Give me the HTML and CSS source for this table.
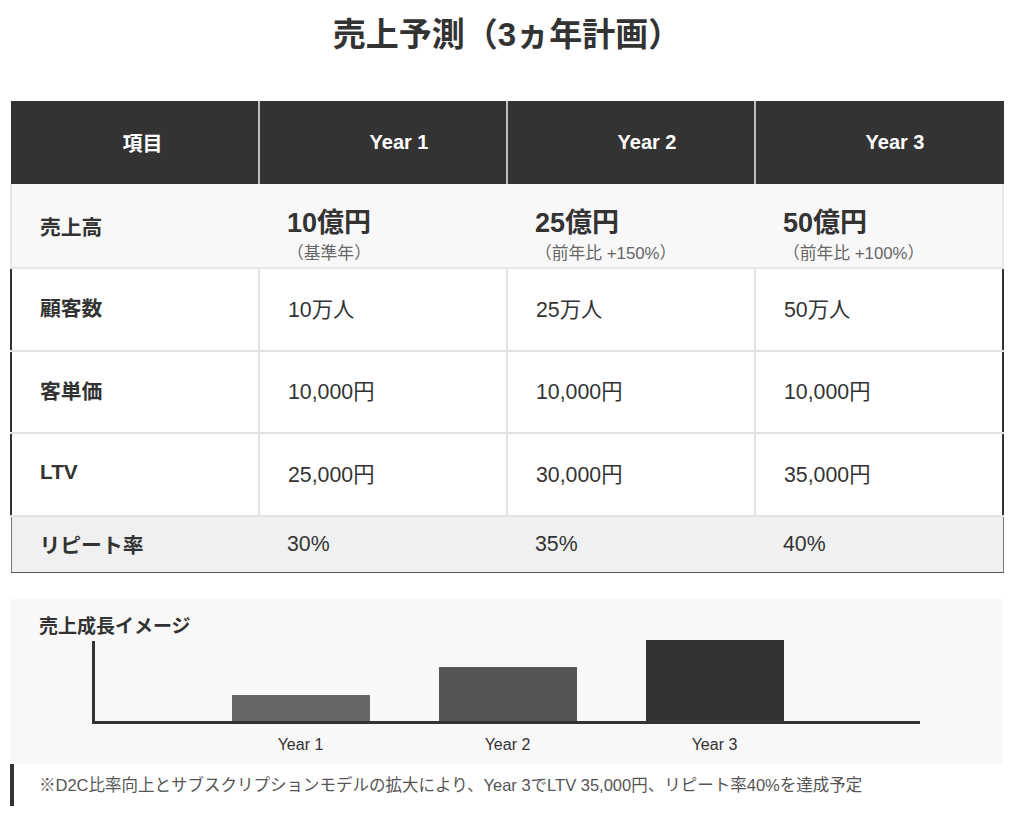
FILE: index.html
```html
<!DOCTYPE html>
<html lang="ja">
<head>
<meta charset="utf-8">
<title>売上予測（3ヵ年計画）</title>
<link rel="stylesheet" href="styles.css">
</head>
<body>
<div class="page">
  <h1 class="title">売上予測（3ヵ年計画）</h1>

  <table class="forecast">
    <thead>
      <tr class="head-row">
        <th class="th-item">項目</th>
        <th class="th-year">Year 1</th>
        <th class="th-year">Year 2</th>
        <th class="th-year th-last">Year 3</th>
      </tr>
    </thead>
    <tbody>
      <tr class="row-sales">
        <td class="label">売上高</td>
        <td class="val"><div class="big">10億円</div><div class="sub">（基準年）</div></td>
        <td class="val"><div class="big">25億円</div><div class="sub">（前年比 +150%）</div></td>
        <td class="val"><div class="big">50億円</div><div class="sub">（前年比 +100%）</div></td>
      </tr>
      <tr class="row">
        <td class="label">顧客数</td>
        <td class="val">10万人</td>
        <td class="val">25万人</td>
        <td class="val">50万人</td>
      </tr>
      <tr class="row">
        <td class="label">客単価</td>
        <td class="val">10,000円</td>
        <td class="val">10,000円</td>
        <td class="val">10,000円</td>
      </tr>
      <tr class="row">
        <td class="label">LTV</td>
        <td class="val">25,000円</td>
        <td class="val">30,000円</td>
        <td class="val">35,000円</td>
      </tr>
      <tr class="row-repeat">
        <td class="label">リピート率</td>
        <td class="val">30%</td>
        <td class="val">35%</td>
        <td class="val">40%</td>
      </tr>
    </tbody>
  </table>

  <section class="chart">
    <h2 class="chart-title">売上成長イメージ</h2>
    <div class="plot">
      <div class="bar bar1" style="height:33%"></div>
      <div class="bar bar2" style="height:67%"></div>
      <div class="bar bar3" style="height:101%"></div>
    </div>
    <div class="labels">
      <span class="xlabel">Year 1</span>
      <span class="xlabel">Year 2</span>
      <span class="xlabel">Year 3</span>
    </div>
  </section>

  <p class="note">※D2C比率向上とサブスクリプションモデルの拡大により、Year 3でLTV 35,000円、リピート率40%を達成予定</p>
</div>
</body>
</html>
```

FILE: styles.css
```css
* { box-sizing: border-box; }

body {
  margin: 0;
  background: #fff;
  color: #333;
  font-family: "Liberation Sans", "Noto Sans CJK JP", sans-serif;
}

.page {
  width: 994px;
  margin-left: 10px;
}

.title {
  margin: 0 0 48px;
  padding-top: 17px;
  font-size: 33px;
  line-height: 36px;
  font-weight: 700;
  text-align: center;
  color: #333;
}

.forecast {
  width: 994px;
  border-collapse: collapse;
  table-layout: fixed;
}

.head-row { height: 83px; }

.forecast th {
  background: #333;
  color: #fff;
  font-size: 20px;
  font-weight: 700;
  text-align: center;
  padding: 0;
  border-right: 2px solid #bdbdbd;
}

.th-item { padding-left: 16px !important; }
.th-year { padding-left: 32px !important; }
.forecast th.th-last { border-right: 2px solid #333; }

.forecast td {
  padding: 0 10px 0 28px;
  vertical-align: middle;
  font-size: 21.3px;
  color: #333;
}

.forecast td.label { font-weight: 700; font-size: 20.8px; }

.row-sales { height: 84px; background: #f8f8f8; }
.row-sales td {
  border-bottom: 2px solid #e6e6e6;
}
.row-sales td.val {
  vertical-align: top;
  padding-top: 24px;
}
.row-sales td:first-child { border-left: 2px solid #e6e6e6; }
.row-sales td:last-child { border-right: 2px solid #e6e6e6; }

.big {
  font-size: 27px;
  line-height: 30px;
  font-weight: 700;
}

.sub {
  margin-top: 5px;
  font-size: 16.8px;
  line-height: 22px;
  color: #666;
}

.row { height: 82.5px; background: #fff; }
.row td {
  padding-bottom: 4px;
  border-right: 2px solid #e2e2e2;
  border-bottom: 2px solid #e2e2e2;
}
.row td:first-child { border-left: 2px solid #333; }
.row td:last-child { border-right: 2px solid #333; }

.row-repeat { height: 57px; background: #f0f0f0; }
.row-repeat td {
  border-bottom: 1px solid #555;
}
.row-repeat td:first-child { border-left: 1px solid #777; }
.row-repeat td:last-child { border-right: 1px solid #777; }

.chart {
  margin-top: 26px;
  width: 992px;
  background: #f8f8f8;
  padding: 16px 29px 9px;
}

.chart-title {
  margin: 0;
  font-size: 19px;
  line-height: 24px;
  font-weight: 700;
  color: #333;
}

.plot {
  margin: 2px 53px 0;
  height: 83px;
  border-left: 3px solid #333;
  border-bottom: 3px solid #333;
  display: flex;
  justify-content: center;
  align-items: flex-end;
  gap: 69px;
}

.bar { width: 138px; }
.bar1 { background: #666; }
.bar2 { background: #555; }
.bar3 { background: #333; }

.labels {
  margin: 11px 53px 0;
  padding-left: 3px;
  display: flex;
  justify-content: center;
  gap: 69px;
}

.xlabel {
  width: 138px;
  text-align: center;
  font-size: 16px;
  line-height: 20px;
  color: #333;
}

.note {
  margin: 0;
  height: 42px;
  border-left: 4px solid #333;
  padding-left: 25px;
  font-size: 16.5px;
  line-height: 42px;
  color: #555;
}
```
